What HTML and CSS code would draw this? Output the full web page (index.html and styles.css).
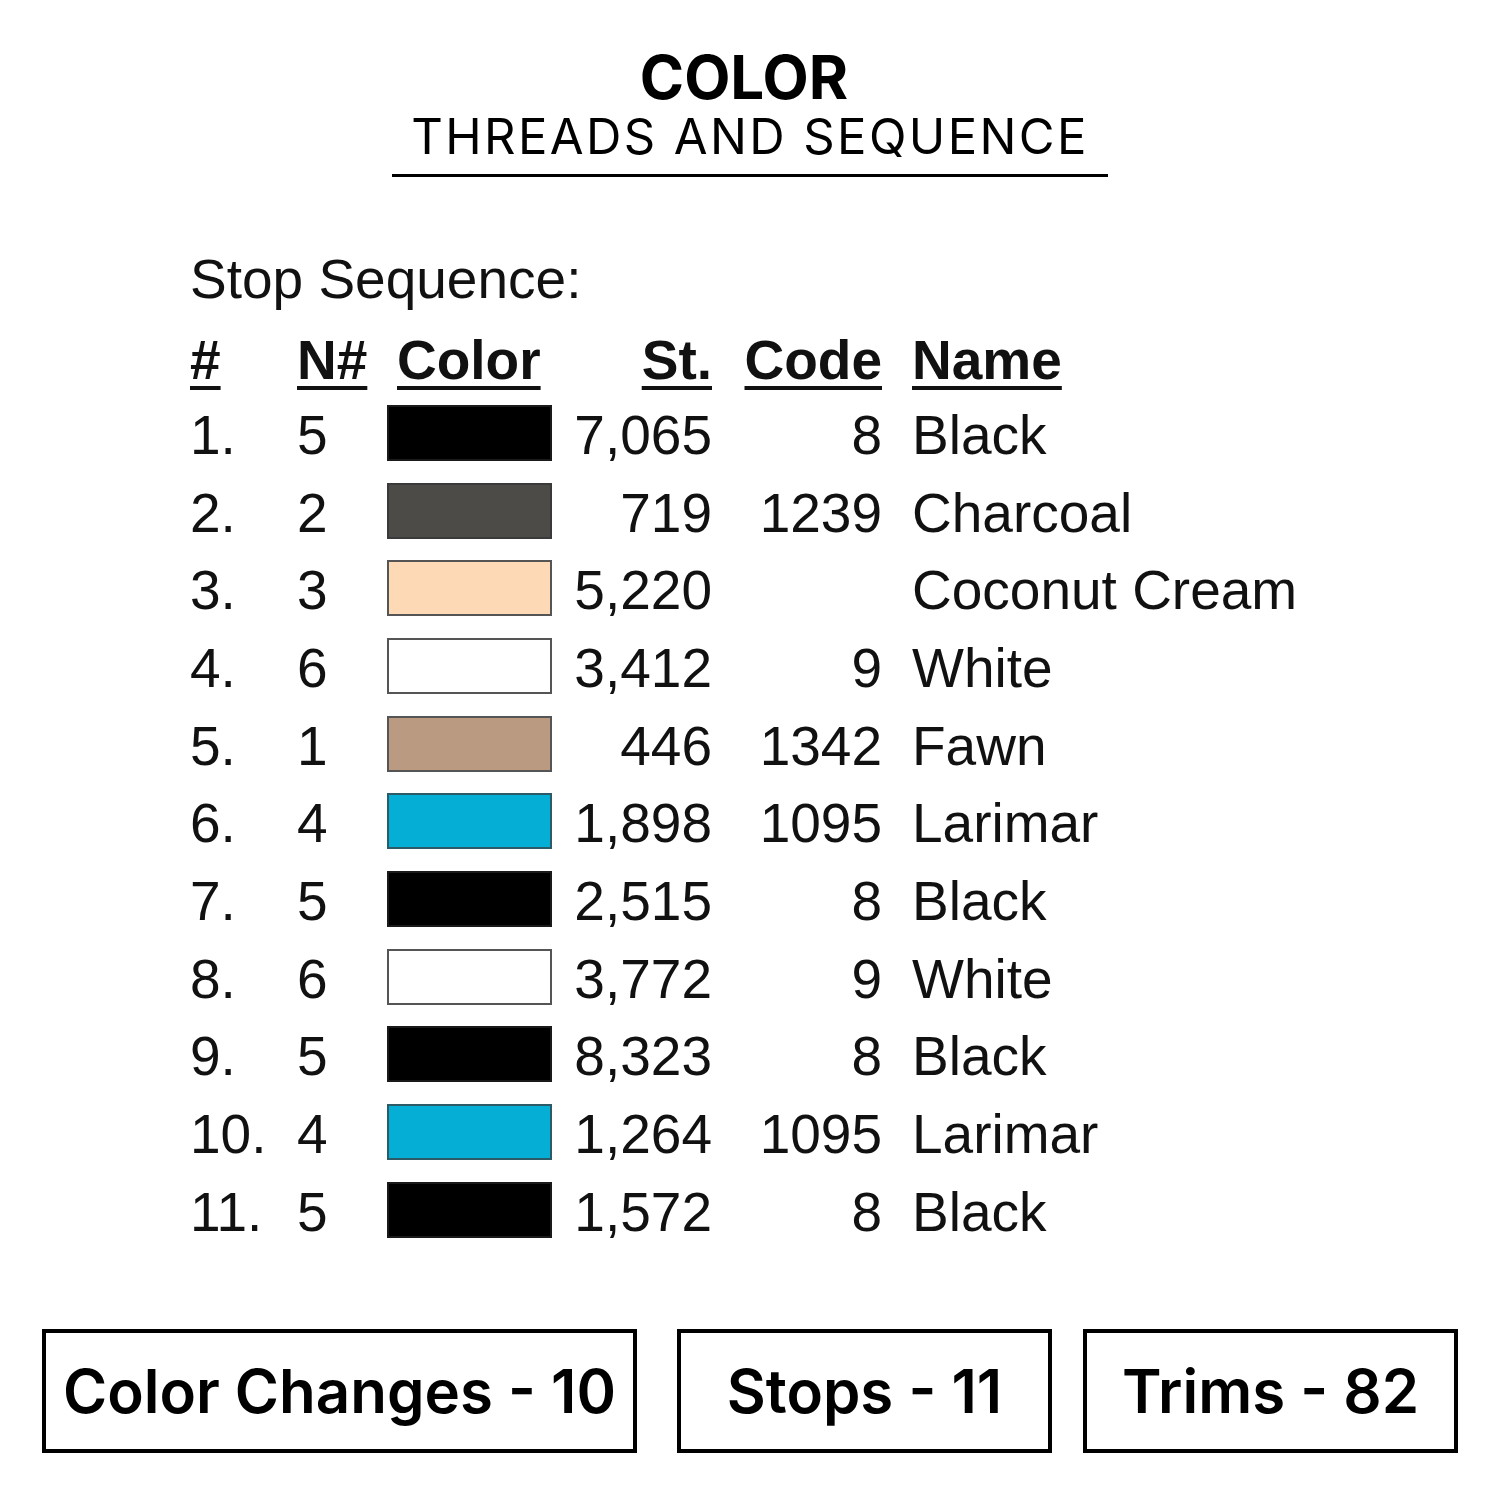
FILE: index.html
```html
<!DOCTYPE html>
<html>
<head>
<meta charset="utf-8">
<link rel="stylesheet" href="styles.css">
</head>
<body>
<div class="page">
  <header class="title">
    <div class="title-main">COLOR</div>
    <div class="title-sub">THREADS AND SEQUENCE</div>
    <div class="title-rule"></div>
  </header>

  <section class="sequence">
    <div class="seq-label">Stop Sequence:</div>
    <div class="seq-grid">
      <div class="hd c-num"><span>#</span></div>
      <div class="hd c-n"><span>N#</span></div>
      <div class="hd c-color"><span>Color</span></div>
      <div class="hd c-st"><span>St.</span></div>
      <div class="hd c-code"><span>Code</span></div>
      <div class="hd c-name"><span>Name</span></div>

      <div class="c-num">1.</div><div class="c-n">5</div><div class="c-sw"><i class="sw black"></i></div><div class="c-st">7,065</div><div class="c-code">8</div><div class="c-name">Black</div>
      <div class="c-num">2.</div><div class="c-n">2</div><div class="c-sw"><i class="sw charcoal"></i></div><div class="c-st">719</div><div class="c-code">1239</div><div class="c-name">Charcoal</div>
      <div class="c-num">3.</div><div class="c-n">3</div><div class="c-sw"><i class="sw cream"></i></div><div class="c-st">5,220</div><div class="c-code"></div><div class="c-name">Coconut Cream</div>
      <div class="c-num">4.</div><div class="c-n">6</div><div class="c-sw"><i class="sw white"></i></div><div class="c-st">3,412</div><div class="c-code">9</div><div class="c-name">White</div>
      <div class="c-num">5.</div><div class="c-n">1</div><div class="c-sw"><i class="sw fawn"></i></div><div class="c-st">446</div><div class="c-code">1342</div><div class="c-name">Fawn</div>
      <div class="c-num">6.</div><div class="c-n">4</div><div class="c-sw"><i class="sw larimar"></i></div><div class="c-st">1,898</div><div class="c-code">1095</div><div class="c-name">Larimar</div>
      <div class="c-num">7.</div><div class="c-n">5</div><div class="c-sw"><i class="sw black"></i></div><div class="c-st">2,515</div><div class="c-code">8</div><div class="c-name">Black</div>
      <div class="c-num">8.</div><div class="c-n">6</div><div class="c-sw"><i class="sw white"></i></div><div class="c-st">3,772</div><div class="c-code">9</div><div class="c-name">White</div>
      <div class="c-num">9.</div><div class="c-n">5</div><div class="c-sw"><i class="sw black"></i></div><div class="c-st">8,323</div><div class="c-code">8</div><div class="c-name">Black</div>
      <div class="c-num">10.</div><div class="c-n">4</div><div class="c-sw"><i class="sw larimar"></i></div><div class="c-st">1,264</div><div class="c-code">1095</div><div class="c-name">Larimar</div>
      <div class="c-num">11.</div><div class="c-n">5</div><div class="c-sw"><i class="sw black"></i></div><div class="c-st">1,572</div><div class="c-code">8</div><div class="c-name">Black</div>
    </div>
  </section>

  <footer class="stats">
    <div class="stat stat-wide">Color Changes - 10</div>
    <div class="stat stat-stops">Stops - 11</div>
    <div class="stat stat-trims">Trims - 82</div>
  </footer>
</div>
</body>
</html>
```

FILE: styles.css
```css
html, body {
  margin: 0;
  padding: 0;
  background: #ffffff;
}

.page {
  width: 1500px;
  height: 1500px;
  color: #000;
  overflow: hidden;
}

/* Title */
.title {
  display: flex;
  flex-direction: column;
  align-items: center;
  padding-top: 46px;
  font-family: Inter, "Open Sans", sans-serif;
}

.title-main {
  font-size: 60px;
  font-weight: 700;
  line-height: 62px;
  margin-left: -12px;
}

.title-sub {
  font-size: 49px;
  font-weight: 400;
  line-height: 54px;
  letter-spacing: 2.4px;
  margin-top: 2px;
}

.title-rule {
  width: 716px;
  height: 3px;
  background: #000;
  margin-top: 10px;
}

/* Sequence table */
.sequence {
  padding-left: 190px;
  padding-top: 72px;
  font-family: "Liberation Sans", Arial, sans-serif;
  font-size: 55px;
  color: #111;
}

.seq-label {
  line-height: 60px;
  height: 60px;
}

.seq-grid {
  margin-top: 15px;
  display: grid;
  grid-template-columns: 107px 90px 165px 160px 170px auto;
  grid-template-rows: 72px;
  grid-auto-rows: 77.7px;
  align-items: center;
  line-height: 62px;
}

.hd {
  font-weight: 700;
}

.hd span {
  text-decoration: underline;
  text-decoration-thickness: 4px;
  text-underline-offset: 7px;
}

.hd.c-color {
  padding-left: 10px;
}

.c-st, .c-code {
  text-align: right;
}

.c-name {
  padding-left: 30px;
  white-space: nowrap;
}

.c-sw {
  display: flex;
  align-items: center;
  height: 100%;
}

.sw {
  display: block;
  box-sizing: border-box;
  width: 165px;
  height: 56px;
  border: 2px solid #3a3a3a;
  margin-top: -4px;
}

.black { background: #000000; border-color: #1a1a1a; }
.charcoal { background: #4c4b47; }
.cream { background: #fed9b6; border-color: #555; }
.white { background: #ffffff; border-color: #555; }
.fawn { background: #bb9a82; border-color: #555; }
.larimar { background: #05aed5; border-color: #2c5a66; }

/* Stats */
.stats {
  display: flex;
  padding-left: 42px;
  margin-top: 78px;
  font-family: Inter, "Open Sans", sans-serif;
  font-weight: 600;
  font-size: 60px;
}

.stat {
  box-sizing: border-box;
  height: 124px;
  border: 4px solid #000;
  display: flex;
  align-items: center;
  justify-content: center;
  white-space: nowrap;
}

.stat-wide {
  width: 595px;
}

.stat-stops {
  width: 375px;
  margin-left: 40px;
}

.stat-trims {
  width: 375px;
  margin-left: 31px;
}
```
